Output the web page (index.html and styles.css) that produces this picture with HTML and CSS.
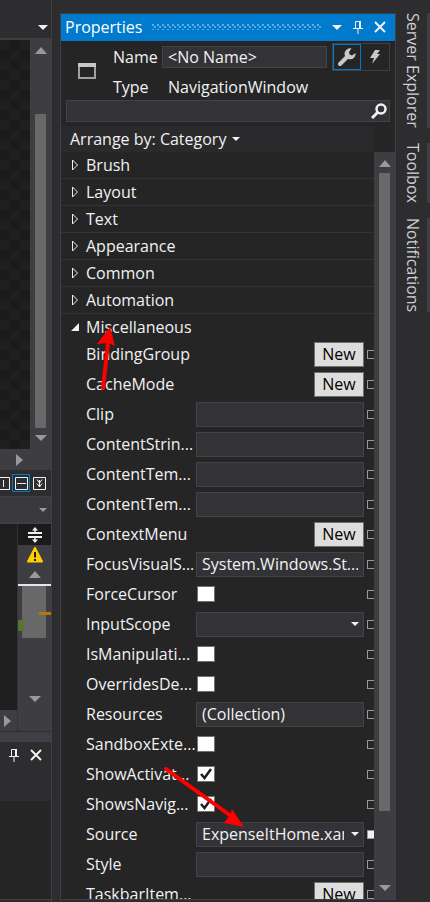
FILE: index.html
```html
<!DOCTYPE html>
<html lang="en">
<head>
<meta charset="utf-8">
<title>Properties</title>
<link rel="stylesheet" href="styles.css">
</head>
<body>
<div class="ide">
  <aside class="dock">
    <div class="dock-top"><i class="caret"></i></div>
    <div class="designer">
      <div class="canvas"></div>
      <div class="scroll"><i class="up"></i><div class="thumb"></div><i class="down"></i></div>
    </div>
    <div class="hscroll"><i class="next"></i></div>
    <div class="split-tools">
      <button class="tool" aria-label="Vertical split"><svg width="13" height="13" viewBox="0 0 13 13"><path d="M.5.5h12v12H.5zM6.500 3v7"/></svg></button>
      <button class="tool selected" aria-label="Horizontal split"><svg width="13" height="13" viewBox="0 0 13 13"><path d="M.5.5h12v12H.5zM2 6.500h9"/></svg></button>
      <button class="tool" aria-label="Collapse pane"><svg width="13" height="13" viewBox="0 0 13 13"><path d="M.5.5h12v12H.5zM4 2.500l2.500 3.500L9 2.500M6.500 3v7M4 6.500L6.500 10 9 6.500"/></svg></button>
    </div>
    <div class="member-bar"><i class="caret dim"></i></div>
    <div class="editor">
      <div class="code"><div class="code-area"></div><div class="hscroll small"><i class="next"></i></div></div>
      <div class="map">
        <div class="splitter"><svg width="16" height="16" viewBox="0 0 16 16"><path d="M1 6h14M1 10h14" stroke="#f1f1f1" stroke-width="2"/><path d="M8 1v4M8 11v4" stroke="#f1f1f1" stroke-width="1.500"/><path d="M5 3.500L8 0l3 3.500zM5 12.500L8 16l3-3.500z" fill="#f1f1f1"/></svg></div>
        <svg class="warn" width="16" height="16" viewBox="0 0 16 16"><path d="M8 1L15 14.500H1z" fill="#fc0" stroke="#fc0" stroke-width="2" stroke-linejoin="round"/><path d="M8 5v5.500M8 12v2" stroke="#1e1e1e" stroke-width="2"/></svg>
        <i class="up"></i>
        <div class="marks"><div class="view"></div><b class="green"></b><b class="orange"></b></div>
        <i class="down"></i>
      </div>
    </div>
    <div class="strip"></div>
    <div class="tool-head">
      <svg width="12" height="14" viewBox="0 0 12 14"><path d="M3.500 8V1.500h5V8M1 8.500h10M6 9v5" class="line"/><path d="M8 1v7" class="line thick"/></svg>
      <svg width="12" height="14" viewBox="0 0 12 14"><path d="M1 2l10 10M11 2L1 12" class="line close"/></svg>
    </div>
    <div class="tool-body"></div>
  </aside>

  <main class="panel">
    <header class="title">
      <span>Properties</span><div class="grip"></div><i class="caret"></i>
      <svg width="12" height="14" viewBox="0 0 12 14"><path d="M3.500 8V1.500h5V8M1 8.500h10M6 9v5" class="line"/><path d="M8 1v7" class="line thick"/></svg>
      <svg width="12" height="14" viewBox="0 0 12 14"><path d="M1 2l10 10M11 2L1 12" class="line close"/></svg>
    </header>
    <section class="head">
      <svg class="win" width="18" height="16" viewBox="0 0 18 16"><path d="M1 1h16v14H1z" fill="none" stroke="#a0a0a0" stroke-width="2"/><path d="M0 0h18v4H0z" fill="#c8c8c8"/></svg>
      <div class="facts">
        <div class="fact"><label for="name">Name</label><input id="name" value="&lt;No Name&gt;">
          <div class="modes">
            <button class="mode on" aria-label="Properties"><svg width="18" height="18" viewBox="0 0 18 18"><path d="M2 16L10 8" stroke="#c8c8c8" stroke-width="4" stroke-linecap="round"/><path d="M13.500.5A5.500 5.500 0 1 0 17.500 5L14 7.500l-2.500-1L11 4z" fill="#c8c8c8"/></svg></button>
            <button class="mode" aria-label="Events"><svg width="12" height="14" viewBox="0 0 12 14"><path d="M6 0h5L8 4h3L3 14l2-6H1z" fill="#c8c8c8"/></svg></button>
          </div>
        </div>
        <div class="fact"><span class="key">Type</span><span class="type">NavigationWindow</span></div>
      </div>
    </section>
    <div class="search"><input type="search" aria-label="Search properties"><svg width="16" height="16" viewBox="0 0 16 16"><circle cx="10" cy="6" r="4.500" fill="none" stroke="#f1f1f1" stroke-width="2.500"/><path d="M7 9l-6 6" stroke="#f1f1f1" stroke-width="3"/></svg></div>
    <button class="arrange">Arrange by: Category<i class="caret small-caret"></i></button>
    <div class="body">
      <div class="list">
        <button class="cat"><svg width="8" height="12" viewBox="0 0 8 12"><path d="M1.500 1v10l5-5z"/></svg>Brush</button>
        <button class="cat"><svg width="8" height="12" viewBox="0 0 8 12"><path d="M1.500 1v10l5-5z"/></svg>Layout</button>
        <button class="cat"><svg width="8" height="12" viewBox="0 0 8 12"><path d="M1.500 1v10l5-5z"/></svg>Text</button>
        <button class="cat"><svg width="8" height="12" viewBox="0 0 8 12"><path d="M1.500 1v10l5-5z"/></svg>Appearance</button>
        <button class="cat"><svg width="8" height="12" viewBox="0 0 8 12"><path d="M1.500 1v10l5-5z"/></svg>Common</button>
        <button class="cat"><svg width="8" height="12" viewBox="0 0 8 12"><path d="M1.500 1v10l5-5z"/></svg>Automation</button>
        <button class="cat open"><svg width="8" height="8" viewBox="0 0 8 8"><path d="M8 0v8H0z"/></svg>Miscellaneous</button>
        <div class="row"><span class="lab">BindingGroup</span><div class="val end"><button class="new">New</button></div><i class="mark"></i></div>
        <div class="row"><span class="lab">CacheMode</span><div class="val end"><button class="new">New</button></div><i class="mark"></i></div>
        <div class="row"><label class="lab" for="clip">Clip</label><div class="val"><input class="field" id="clip"></div><i class="mark"></i></div>
        <div class="row"><label class="lab" for="csf">ContentStrin...</label><div class="val"><input class="field" id="csf"></div><i class="mark"></i></div>
        <div class="row"><label class="lab" for="ct">ContentTem...</label><div class="val"><input class="field" id="ct"></div><i class="mark"></i></div>
        <div class="row"><label class="lab" for="cts">ContentTem...</label><div class="val"><input class="field" id="cts"></div><i class="mark"></i></div>
        <div class="row"><span class="lab">ContextMenu</span><div class="val end"><button class="new">New</button></div><i class="mark"></i></div>
        <div class="row"><label class="lab" for="fvs">FocusVisualS...</label><div class="val"><input class="field" id="fvs" value="System.Windows.St..."></div><i class="mark"></i></div>
        <div class="row"><label class="lab" for="fc">ForceCursor</label><div class="val"><input type="checkbox" id="fc"></div><i class="mark"></i></div>
        <div class="row"><label class="lab" for="is">InputScope</label><div class="val drop"><select class="field" id="is"><option></option></select><i class="caret small-caret"></i></div><i class="mark"></i></div>
        <div class="row"><label class="lab" for="im">IsManipulati...</label><div class="val"><input type="checkbox" id="im"></div><i class="mark"></i></div>
        <div class="row"><label class="lab" for="od">OverridesDe...</label><div class="val"><input type="checkbox" id="od"></div><i class="mark"></i></div>
        <div class="row"><label class="lab" for="res">Resources</label><div class="val"><input class="field" id="res" value="(Collection)"></div><i class="mark"></i></div>
        <div class="row"><label class="lab" for="se">SandboxExte...</label><div class="val"><input type="checkbox" id="se"></div><i class="mark"></i></div>
        <div class="row"><label class="lab" for="sa">ShowActivat...</label><div class="val"><span class="tick"><input type="checkbox" id="sa" checked><svg width="12" height="12" viewBox="0 0 12 12"><path d="M1 6l3.500 4L11 1"/></svg></span></div><i class="mark"></i></div>
        <div class="row"><label class="lab" for="sn">ShowsNavig...</label><div class="val"><span class="tick"><input type="checkbox" id="sn" checked><svg width="12" height="12" viewBox="0 0 12 12"><path d="M1 6l3.500 4L11 1"/></svg></span></div><i class="mark"></i></div>
        <div class="row"><label class="lab" for="src">Source</label><div class="val drop"><select class="field" id="src"><option>ExpenseItHome.xaml</option></select><i class="caret small-caret"></i></div><i class="mark set"></i></div>
        <div class="row"><label class="lab" for="sty">Style</label><div class="val"><input class="field" id="sty"></div><i class="mark"></i></div>
        <div class="row"><span class="lab">TaskbarItem...</span><div class="val end"><button class="new">New</button></div><i class="mark"></i></div>
      </div>
      <div class="scroll main-scroll"><i class="up"></i><div class="thumb"></div><i class="down"></i></div>
    </div>
  </main>

  <nav class="tabs">
    <a href="#server">Server Explorer</a>
    <a href="#toolbox">Toolbox</a>
    <a href="#notifications">Notifications</a>
  </nav>

  <svg class="arrow first" width="20" height="66" viewBox="0 0 20 66"><path d="M7 61L12 16" stroke="#f00" stroke-width="4" stroke-linecap="round"/><path d="M14 0L19 19l-6-3-12 1z" fill="#f00"/></svg>
  <svg class="arrow second" width="82" height="62" viewBox="0 0 82 62"><path d="M2 2L67 49" stroke="#f00" stroke-width="4" stroke-linecap="round"/><path d="M80 60L60 56l6-8 2-6z" fill="#f00"/></svg>
</div>
</body>
</html>
```
FILE: styles.css
```css
* { box-sizing: border-box; }
body { margin: 0; background: #2d2d30; color: #f1f1f1; font: 16px/20px "Open Sans", "Noto Sans", sans-serif; }
button, input, select { font: inherit; color: inherit; border: 0; padding: 0; margin: 0; background: none; border-radius: 0; outline: 0; }
i { display: block; flex: none; }
svg { display: block; flex: none; }
.line { fill: none; stroke: #f1f1f1; }
.thick { stroke-width: 2; }
.close { stroke-width: 2; }
.ide { position: relative; display: flex; height: 100vh; overflow: hidden; }

.caret { border: 5px solid transparent; border-top-color: #f1f1f1; border-bottom: 0; }
.small-caret { border-width: 4px 4px 0; }
.dim { border-width: 4px 4px 0; border-top-color: #999; }
.up { border: 6px solid transparent; border-bottom: 7px solid #999; border-top: 0; }
.down { border: 6px solid transparent; border-top: 6px solid #999; border-bottom: 0; }
.next { border: 6px solid transparent; border-left: 7px solid #999; border-right: 0; }

.dock { width: 52px; flex: none; display: flex; flex-direction: column; border-right: 1px solid #3f3f46; padding-bottom: 2px; }
.dock-top { height: 38px; display: flex; justify-content: flex-end; align-items: flex-end; padding: 0 3px 8px; }
.designer { height: 411px; display: flex; border-top: 2px solid #3e3e42; }
.canvas { flex: 1; background: repeating-conic-gradient(#1b1b1c 0 25%, #1f1f20 0 50%) 0 0 / 20px 20px; }
.scroll { width: 21px; flex: none; background: #3e3e42; display: flex; flex-direction: column; align-items: center; padding: 7px 0 8px; }
.scroll .thumb { width: 11px; flex: 1; background: #686868; }
.designer .thumb { margin: 60px 0 7px; }
.hscroll { height: 21px; flex: none; display: flex; align-items: center; justify-content: flex-end; padding-right: 28px; background: #3e3e42; }
.hscroll.small { padding-right: 6px; }
.split-tools { height: 27px; display: flex; justify-content: flex-end; align-items: center; padding-right: 3px; border-bottom: 1px solid #3f3f46; }
.tool { width: 18px; height: 18px; display: grid; place-items: center; border: 1px solid transparent; flex: none; }
.tool.selected { border-color: #007acc; }
.tool path { fill: none; stroke: #f1f1f1; }
.member-bar { height: 27px; background: #3a3a3e; border-bottom: 2px solid #3f3f46; display: flex; align-items: center; justify-content: flex-end; padding-right: 4px; }
.editor { height: 207px; display: flex; }
.code { width: 17px; display: flex; flex-direction: column; }
.code-area { flex: 1; background: #1e1e1e; }
.map { flex: 1; background: #3e3e42; border-left: 1px solid #333337; display: flex; flex-direction: column; align-items: center; }
.splitter { align-self: stretch; height: 21px; background: #1b1b1c; display: grid; place-items: center; }
.warn { margin: 2px 0 8px; }
.marks { position: relative; align-self: stretch; height: 54px; margin: 6px 0 58px; border-top: 2px solid #e6e6e6; flex: none; }
.view { height: 52px; margin: 0 5px 0 4px; background: #686868; }
.green { position: absolute; left: 0; top: 34px; width: 6px; height: 11px; background: #577430; }
.orange { position: absolute; right: 0; top: 26px; width: 12px; height: 3px; background: #b8770b; }
.strip { height: 11px; background: #3f3f46; border-top: 1px solid #2d2d30; }
.tool-head { height: 59px; display: flex; justify-content: flex-end; gap: 10px; padding: 6px 9px 0 0; }
.tool-body { flex: 1; background: #252526; border-bottom: 1px solid #3f3f46; }

.panel { flex: 1; min-width: 0; margin: 13px 0 2px 8px; border: 1px solid #3f3f46; background: #252526; display: flex; flex-direction: column; }
.title { height: 27px; flex: none; background: #007acc; color: #fff; display: flex; align-items: center; gap: 10px; padding: 0 9px 1px 4px; }
.grip { flex: 1; height: 6px; background: radial-gradient(circle at 1px 1px, #5aaee6 1px, transparent 1px) 0 0 / 5px 5px, radial-gradient(circle at 1px 1px, #5aaee6 1px, transparent 1px) 2px 2px / 5px 5px; }
.head { display: flex; gap: 17px; padding: 2px 5px 0 17px; }
.win { margin-top: 20px; }
.facts { flex: 1; min-width: 0; }
.fact { display: flex; align-items: center; height: 28px; }
.fact + .fact { height: 29px; padding-top: 2px; }
.fact label, .key { flex: none; width: 49px; }
.key { width: 55px; }
.fact input { flex: 1; min-width: 0; height: 22px; padding: 0 5px; margin-right: 5px; }
.fact input, .search, .field { background: #333337; border: 1px solid #434346; }
.modes { display: flex; border: 1px solid #3f3f46; height: 28px; }
.mode { width: 28px; display: grid; place-items: center; }
.mode.on { border: 1px solid #007acc; }
.search { display: flex; align-items: center; height: 22px; margin: 0 5px; padding-right: 2px; flex: none; }
.search input { flex: 1; min-width: 0; }
.arrange { display: flex; align-items: center; gap: 6px; height: 26px; flex: none; margin: 4px 21px 0 0; padding-left: 9px; background: #2a2a2c; }
.body { flex: 1; min-height: 0; display: flex; }
.list { flex: 1; min-width: 0; overflow: hidden; }
.main-scroll { padding: 8px 0; }
.main-scroll .thumb { margin: 6px 0 74px; }
.cat { display: flex; align-items: center; gap: 7px; width: 100%; height: 27px; padding-left: 10px; border-bottom: 1px solid #333337; }
.cat path { fill: none; stroke: #f1f1f1; }
.cat.open { height: 25px; border-bottom: 0; }
.cat.open path { fill: #f1f1f1; stroke: none; }
.row { display: flex; align-items: center; height: 30px; padding-left: 25px; }
.lab { width: 110px; flex: none; white-space: nowrap; overflow: hidden; }
.val { flex: 1; min-width: 0; display: flex; align-items: center; }
.val.end { justify-content: flex-end; }
.field { width: 100%; min-width: 0; height: 25px; padding: 0 5px; }
.new { width: 50px; height: 25px; background: #ddd; color: #000; border: 1px solid #707070; }
.drop { position: relative; }
.drop select { appearance: none; padding-right: 19px; overflow: hidden; }
.drop .caret { position: absolute; right: 5px; }
.mark { width: 7px; height: 9px; margin-left: 3px; border: 1px solid #999; border-right: 0; }
.mark.set { background: #f1f1f1; }
input[type="checkbox"] { appearance: none; width: 18px; height: 16px; margin-left: 1px; background: #fff; border: 1px solid #707070; display: block; }
.tick { position: relative; }
.tick svg { position: absolute; left: 4px; top: 2px; pointer-events: none; }
.tick path { fill: none; stroke: #1e1e1e; stroke-width: 2.500; }

.tabs { width: 34px; flex: none; display: flex; flex-direction: column; gap: 15px; padding-top: 13px; }
.tabs a { writing-mode: vertical-rl; width: 100%; color: #d0d0d0; text-decoration: none; border-right: 3px solid #3f3f46; padding-right: 4px; }

.arrow { position: absolute; fill: none; pointer-events: none; }
.first { left: 96px; top: 327px; }
.second { left: 164px; top: 767px; }
```
